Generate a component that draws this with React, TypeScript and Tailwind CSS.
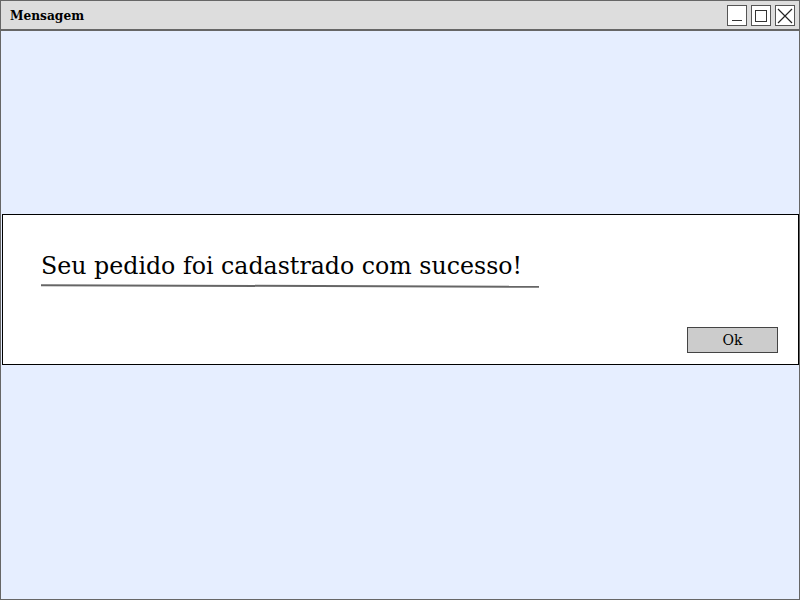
export default function App() {
  return (
    <div className="w-[800px] h-[600px] bg-[#e6eeff] border border-[#666666] flex flex-col" style={{ fontFamily: '"DejaVu Serif", serif' }}>
      <div className="h-[30px] shrink-0 bg-[#dddddd] border-b-2 border-[#666666] flex items-center pl-[9px] pr-[4px]">
        <span className="text-[12.2px] font-bold text-black flex-1 pt-[2px]">Mensagem</span>
        <div className="flex gap-[4px] pt-[1px]">
          <div className="w-[20px] h-[21px] border border-[#555555] bg-white flex items-end justify-center pb-[4px]">
            <div className="w-[10px] h-[1px] bg-[#333333]" />
          </div>
          <div className="w-[20px] h-[21px] border border-[#555555] bg-white flex items-center justify-center">
            <div className="w-[12px] h-[12px] border border-[#333333]" />
          </div>
          <div className="w-[20px] h-[21px] border border-[#555555] bg-white flex items-center justify-center">
            <svg width="16" height="16" viewBox="0 0 16 16"><path d="M1 1L15 15M15 1L1 15" stroke="#222" strokeWidth="1.2" /></svg>
          </div>
        </div>
      </div>
      <div className="flex-1 flex flex-col pt-[183px]">
        <div className="ml-[1px] mr-0 h-[151px] bg-white border border-black flex flex-col">
          <div className="pl-[38px] pt-[35px]">
            <div className="text-[23.7px] leading-[32px] text-black inline-block">Seu pedido foi cadastrado com sucesso!</div>
            <div className="w-[498px] h-[2px] bg-[#666666] mt-[3px] rotate-[0.2deg]" />
          </div>
          <div className="flex justify-end pr-[20px] mt-[40px]">
            <div className="w-[91px] h-[26px] bg-[#cccccc] border border-[#444444] flex items-center justify-center text-[14px] text-black">Ok</div>
          </div>
        </div>
      </div>
    </div>
  );
}
